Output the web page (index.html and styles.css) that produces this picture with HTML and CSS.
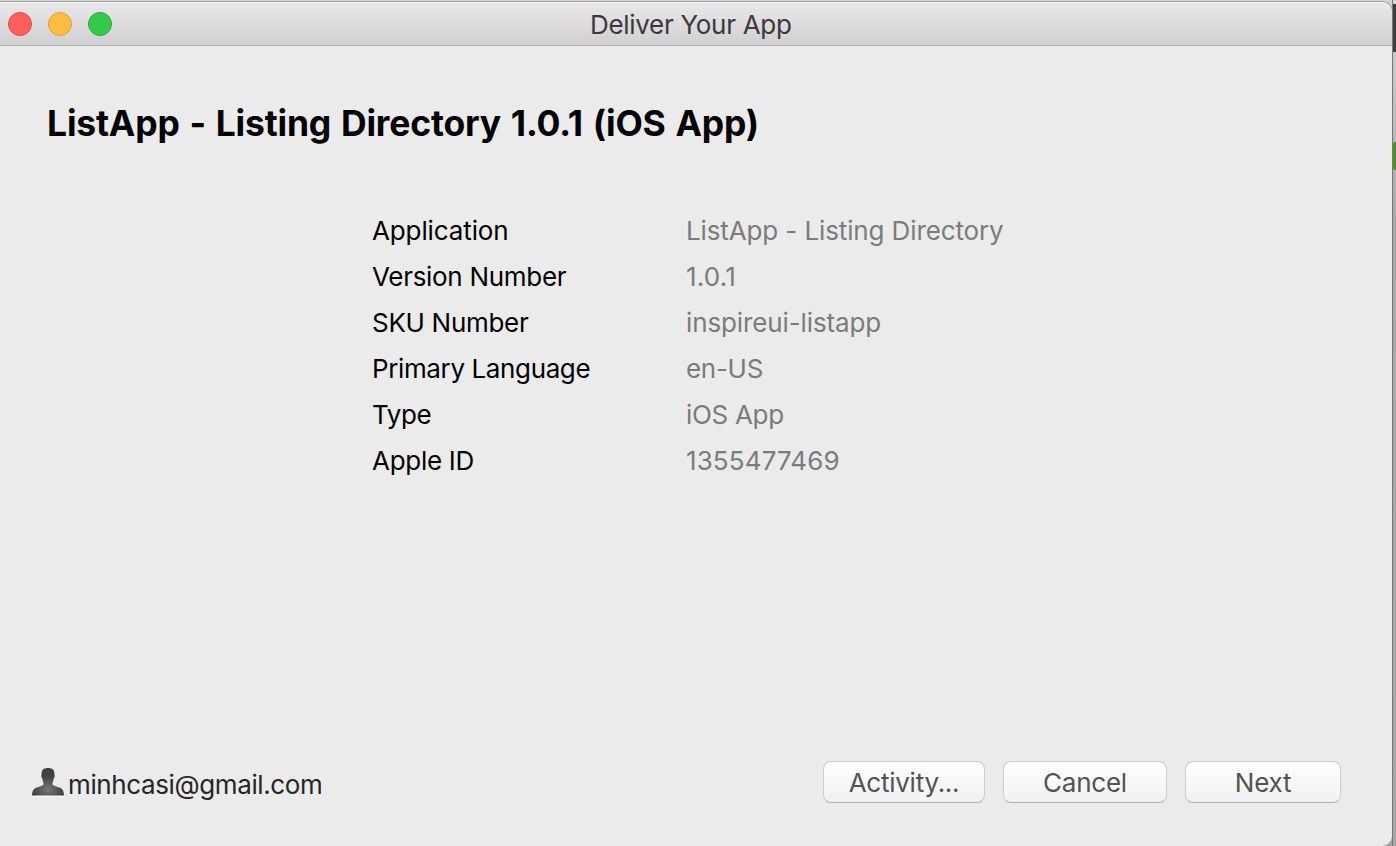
FILE: index.html
```html
<!DOCTYPE html>
<html lang="en">
<head>
<meta charset="utf-8">
<title>Deliver Your App</title>
<link rel="stylesheet" href="styles.css">
</head>
<body>
<div class="window">
  <header class="titlebar">
    <div class="lights"><span class="light close"></span><span class="light minimize"></span><span class="light maximize"></span></div>
    <div class="title">Deliver Your App</div>
  </header>
  <main class="content">
    <h1 class="heading">ListApp - Listing Directory 1.0.1 (iOS App)</h1>
    <dl class="details">
      <dt class="wide">Application</dt><dd class="wide">ListApp - Listing Directory</dd>
      <dt>Version Number</dt><dd class="version">1.0.1</dd>
      <dt>SKU Number</dt><dd class="wide">inspireui-listapp</dd>
      <dt class="narrow">Primary Language</dt><dd>en-US</dd>
      <dt class="narrow">Type</dt><dd>iOS App</dd>
      <dt>Apple ID</dt><dd class="number">1355477469</dd>
    </dl>
  </main>
  <footer class="footer">
    <div class="account">
      <svg class="avatar" width="32" height="29" viewBox="0 0 32 29">
        <defs><radialGradient id="body" cx=".5" cy=".78" r=".5"><stop offset="0" stop-color="#757575"/><stop offset="1" stop-color="#404040"/></radialGradient></defs>
        <path d="M0 28.300H32" stroke="#fafafa" stroke-width="1.400"/>
        <path d="M16 0C11.500 0 9.300 2 9.600 6.500C9 7 9.300 9.500 10.300 10.400C10.500 12.500 11 13.700 11.500 14.500V16.600C10.500 18 7 18.600 4 19.800C1 21.200 .1 23.500 0 27.600H32C31.900 23.500 31 21.200 28 19.800C25 18.600 21.500 18 20.500 16.600V14.500C21 13.700 21.500 12.500 21.700 10.400C22.700 9.500 23 7 22.400 6.500C22.700 2 20.500 0 16 0Z" fill="url(#body)"/>
      </svg>
      <span class="email">minhcasi@gmail.com</span>
    </div>
    <div class="actions">
      <button class="button activity">Activity...</button>
      <button class="button cancel">Cancel</button>
      <button class="button next">Next</button>
    </div>
  </footer>
</div>
<div class="backdrop"><span class="dark-strip"></span><span class="green-strip"></span></div>
</body>
</html>
```

FILE: styles.css
```css
* { box-sizing: border-box; }
body {
  margin: 0;
  width: 1396px;
  height: 846px;
  overflow: hidden;
  display: flex;
  background: linear-gradient(#d5d5d5 0, #c9c9c9 60px, #a9a9a9 220px, #a6a6a6 100%);
  font-family: Inter, "Liberation Sans", sans-serif;
  font-size: 26px;
  color: #000;
}
.window {
  width: 1392px;
  height: 844px;
  margin-top: 2px;
  display: flex;
  flex-direction: column;
  background: #ebebeb;
  border-radius: 0 10px 10px 0;
  box-shadow: 0 0 0 1px #a0a0a0;
  flex: none;
}
.titlebar {
  height: 44px;
  display: flex;
  align-items: center;
  border-top: 1px solid #f4f4f4;
  border-bottom: 1px solid #b0aeb0;
  border-radius: 0 10px 0 0;
  background: linear-gradient(#e9e7e9, #d1cfd1);
}
.lights { display: flex; gap: 16px; padding-left: 8px; width: 130px; }
.light { width: 24px; height: 24px; border-radius: 50%; border: 1px solid; }
.close { background: #fd605c; border-color: #df4744; }
.minimize { background: #fdbd40; border-color: #dea034; }
.maximize { background: #35c84a; border-color: #27aa35; }
.title { flex: 1; padding: 2px 0 0 460px; color: #3a393a; line-height: 32px; letter-spacing: -0.3px; }
.content { flex: 1; padding: 54px 0 0 47px; }
.heading { margin: 0; font-size: 35.5px; font-weight: 700; line-height: 48px; letter-spacing: -0.18px; word-spacing: 1.6px; white-space: nowrap; }
.details {
  margin: 60px 0 0 325px;
  display: grid;
  grid-template-columns: 314px 1fr;
  grid-auto-rows: 46px;
  line-height: 46px;
  letter-spacing: -0.3px;
}
dd { margin: 0; color: #7b7b7b; }
.wide { letter-spacing: -0.12px; }
.narrow { letter-spacing: -0.38px; }
.version { letter-spacing: 0.2px; }
.number { letter-spacing: 0.12px; }
.footer { height: 88px; flex: none; display: flex; justify-content: space-between; padding: 3px 51px 0 32px; }
.account { display: flex; gap: 4px; color: #262626; }
.avatar { margin-top: 7px; }
.email { line-height: 48px; letter-spacing: -0.38px; }
.actions { display: flex; gap: 18px; }
.button {
  height: 42px;
  padding: 0;
  border: 1px solid #cdcdcd;
  border-bottom-color: #b0b0b0;
  border-radius: 8px;
  background: linear-gradient(#fff, #f1f1f1);
  color: #535353;
  font: inherit;
  letter-spacing: -0.25px;
}
.activity { width: 162px; }
.cancel { width: 164px; }
.next { width: 156px; }
.backdrop { width: 4px; flex: none; display: flex; flex-direction: column; border-left: 1px solid #777; }
.dark-strip { height: 48px; margin-top: 4px; background: #3e3e3e; }
.green-strip { height: 28px; margin-top: 90px; background: #4c9428; border-radius: 2px 0 0 2px; }
```
